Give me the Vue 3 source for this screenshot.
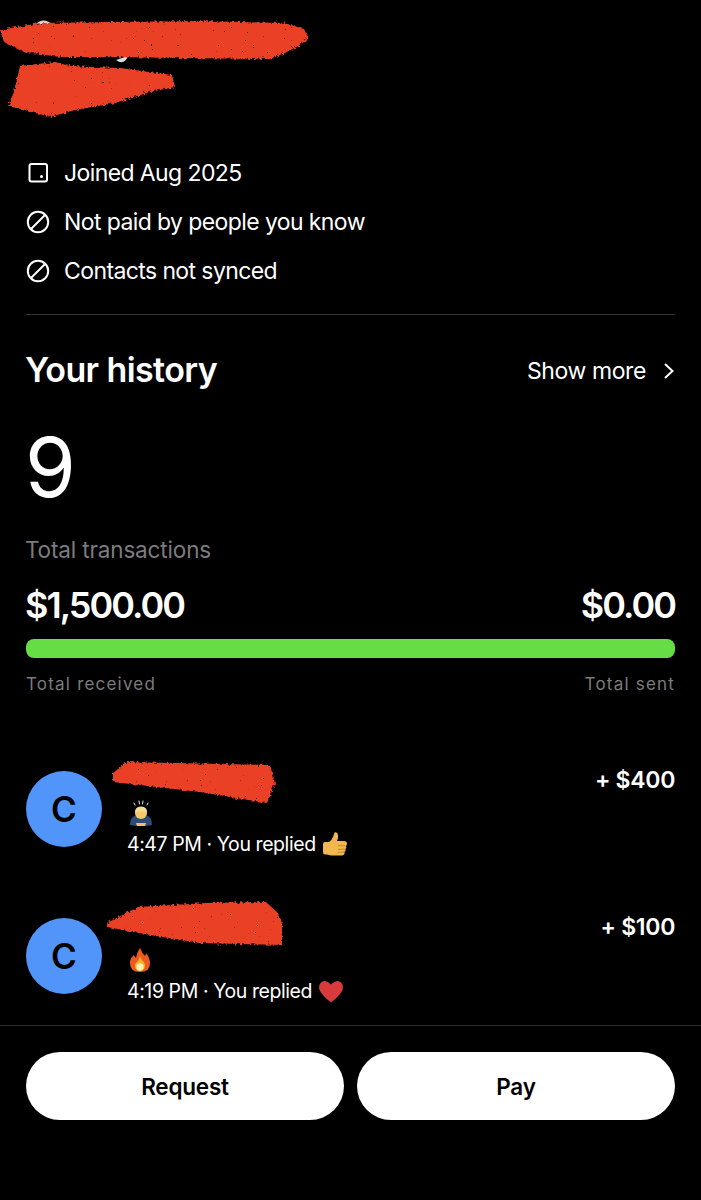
<template>
  <div class="page">
    <header class="profile">
      <svg class="scribble" width="330" height="130" viewBox="0 0 330 130">
        <defs>
          <filter id="rough" x="-5%" y="-15%" width="110%" height="130%">
            <feTurbulence type="fractalNoise" baseFrequency="0.35" numOctaves="2" seed="4" result="n"/>
            <feDisplacementMap in="SourceGraphic" in2="n" scale="5" result="d"/>
            <feTurbulence type="fractalNoise" baseFrequency="0.45" numOctaves="3" seed="9" result="s"/>
            <feColorMatrix in="s" type="matrix" values="0 0 0 0 0  0 0 0 0 0  0 0 0 0 0  0 0 0 -14 12" result="holes"/>
            <feComposite in="d" in2="holes" operator="in"/>
          </filter>
        </defs>
        <path d="M36 24 Q43 17 52 24 Z M116 60 Q124 66 128 56 Z" fill="#dcdcdc"/>
        <g filter="url(#rough)">
          <path fill="#ea4126" d="M0 30 L40 23 L110 22 L200 21 L285 23 L304 29 L308 37 L302 44 L285 53 L270 59 L180 58 L110 57 L60 57 L25 52 L4 42 Z"/>
          <path fill="#ea4126" d="M20 66 L55 62 L70 66 L120 68 L172 75 L175 87 L150 92 L115 103 L75 110 L50 117 L25 110 L8 106 L14 92 Z"/>
        </g>
      </svg>
    </header>

    <ul class="facts">
      <li v-for="fact in facts" :key="fact.text">
        <svg v-if="fact.icon === 'calendar'" width="24" height="24" viewBox="0 0 24 24" fill="none" stroke="#fff" stroke-width="2">
          <rect x="3.500" y="3" width="17.500" height="17.500" rx="2"/>
          <circle cx="15.500" cy="15.500" r="1.500" fill="#fff" stroke="none"/>
        </svg>
        <svg v-else width="24" height="24" viewBox="0 0 24 24" fill="none" stroke="#fff" stroke-width="2">
          <circle cx="12" cy="12" r="10.200"/>
          <line x1="5" y1="19" x2="19" y2="5"/>
        </svg>
        <span>{{ fact.text }}</span>
      </li>
    </ul>

    <section class="history">
      <div class="history-head">
        <h2>Your history</h2>
        <div class="show-more">
          <span>Show more</span>
          <svg width="12" height="18" viewBox="0 0 12 18" fill="none" stroke="#fff" stroke-width="2">
            <polyline points="2,2 9.500,9 2,16"/>
          </svg>
        </div>
      </div>
      <div class="count">9</div>
      <div class="count-label">Total transactions</div>
      <div class="totals">
        <span>$1,500.00</span>
        <span>$0.00</span>
      </div>
      <div class="bar"></div>
      <div class="total-labels">
        <span>Total received</span>
        <span>Total sent</span>
      </div>
    </section>

    <section class="payments">
      <div v-for="p in payments" :key="p.time" class="payment">
        <div class="avatar">C</div>
        <div class="payment-body">
          <svg class="scribble-name" :style="{ left: p.offset + 'px' }" width="180" height="48" viewBox="0 0 180 48">
            <path fill="#ea4126" filter="url(#rough)" :d="p.scribble"/>
          </svg>
          <div class="emoji-line">
            <svg v-if="p.emoji === 'bow'" width="24" height="27" viewBox="0 0 24 27">
              <g stroke="#e8e8e8" stroke-width="1" stroke-linecap="round">
                <line x1="5" y1="3" x2="6" y2="5"/><line x1="10" y1="1" x2="10.500" y2="4"/>
                <line x1="14" y1="1" x2="13.500" y2="4"/><line x1="19" y1="3" x2="18" y2="5"/>
              </g>
              <path fill="#2d4a78" d="M1 25 Q1 17 7 15 L17 15 Q23 17 23 25 L17 26 L7 26 Z"/>
              <circle cx="12" cy="13" r="6" fill="#f5c96a"/>
              <path fill="#f3dc92" d="M6 13 Q5.500 6.500 12 6.500 Q18.500 6.500 18 13 Q12 9.500 6 13Z"/>
              <path fill="#f2c063" d="M7 23 L17 23 L16 26 L8 26 Z"/>
            </svg>
            <svg v-else width="22" height="26" viewBox="0 0 22 26">
              <path fill="#ee5a1f" d="M11 1 Q13 6 16 9 Q17 7 17 6 Q21 11 21 16 Q21 25 11 25 Q1 25 1 16 Q1 11 5 8 Q5.500 10 7 11 Q8 5 11 1Z"/>
              <path fill="#fbb12b" d="M11 9 Q12 13 15 15 Q17 18 15.500 21 Q14 24 11 24 Q7 24 6 20 Q5.500 16 9 14 Q10.500 12 11 9Z"/>
              <ellipse cx="11" cy="20" rx="3.600" ry="3.800" fill="#fff0b8"/>
            </svg>
          </div>
          <div class="meta">
            <span>{{ p.time }} · You replied</span>
            <svg v-if="p.reply === 'thumb'" class="reply-icon" width="26" height="26" viewBox="0 0 26 26">
              <path fill="#f2b74e" d="M1 13 Q1 11 3 11 L7 11 Q10 9 11 6 Q12 3 12.500 1.500 Q15.500 0.500 16 4 Q16.500 7 15 10 L22 10 Q25 10 25 12.500 Q25 14 24 15 Q25 17 23.500 18 Q24 20 22.500 21 Q23 24 20 24.500 L9 24.500 Q7 24 5 23.500 L3 23.500 Q1 23.500 1 21 Z"/>
              <path fill="none" stroke="#b97f2a" stroke-width="0.800" d="M16 14.500 L24 15 M16 18.500 L23.500 18 M16 21.500 L22.500 21"/>
            </svg>
            <svg v-else class="reply-icon" width="26" height="24" viewBox="0 0 26 24">
              <path fill="#d93a3c" d="M13 23.500 Q4 16.500 1.500 11 Q0 6 3.500 3 Q8 0 13 5.500 Q18 0 22.500 3 Q26 6 24.500 11 Q22 16.500 13 23.500Z"/>
            </svg>
          </div>
        </div>
        <div class="amount">{{ p.amount }}</div>
      </div>
    </section>

    <footer class="actions">
      <button>Request</button>
      <button>Pay</button>
    </footer>
  </div>
</template>

<script setup>
const facts = [
  { icon: 'calendar', text: 'Joined Aug 2025' },
  { icon: 'ban', text: 'Not paid by people you know' },
  { icon: 'ban', text: 'Contacts not synced' }
]

const payments = [
  {
    time: '4:47 PM',
    amount: '+ $400',
    emoji: 'bow',
    reply: 'thumb',
    offset: -15,
    scribble: 'M1 15 L15 4 L158 7 L163 25 L155 45 L88 34 L1 24 Z'
  },
  {
    time: '4:19 PM',
    amount: '+ $100',
    emoji: 'fire',
    reply: 'heart',
    offset: -21,
    scribble: 'M1 18 L32 2 L100 -2 L160 -3 L172 8 L176 18 L176 40 L94 38 L44 30 L1 22 Z'
  }
]
</script>

<style>
html, body { background: #000; }
</style>

<style scoped>
.page {
  width: 701px;
  height: 1200px;
  background: #000;
  color: #fff;
  font-family: Inter, "Liberation Sans", sans-serif;
  overflow: hidden;
}

.profile {
  position: relative;
  height: 148px;
}

.scribble {
  position: absolute;
  left: 0;
  top: 0;
}

.facts {
  list-style: none;
  margin: 0;
  padding: 0 26px 19px;
}

.facts li {
  display: flex;
  align-items: center;
  gap: 14px;
  height: 49px;
  font-size: 23px;
  letter-spacing: -0.600px;
}

.history {
  margin: 0 26px;
  border-top: 1px solid #333;
}

.history-head {
  display: flex;
  justify-content: space-between;
  align-items: center;
  margin-top: 31px;
  height: 46px;
}

h2 {
  margin: 0 0 0 -1px;
  font-size: 34px;
  font-weight: 600;
  letter-spacing: -0.600px;
}

.show-more {
  display: flex;
  align-items: center;
  gap: 17px;
  margin-top: 3px;
  font-size: 23px;
  letter-spacing: -0.400px;
}

.count {
  margin-top: 26px;
  height: 100px;
  line-height: 100px;
  font-size: 82px;
  font-weight: 400;
  margin-left: -1px;
}

.count-label {
  margin-top: 19px;
  margin-left: -1px;
  font-size: 22.500px;
  line-height: 26px;
  color: #7c7c7e;
  letter-spacing: -0.150px;
}

.totals {
  display: flex;
  justify-content: space-between;
  margin: 20px 0 0 -1px;
  font-size: 36px;
  line-height: 44px;
  font-weight: 600;
  letter-spacing: -2px;
}

.bar {
  height: 19px;
  margin-top: 12px;
  border-radius: 8px;
  background: #66dd44;
}

.total-labels {
  display: flex;
  justify-content: space-between;
  margin-top: 16px;
  font-size: 17px;
  line-height: 20px;
  color: #7c7c7e;
  letter-spacing: 1.200px;
}

.payments {
  margin: 70px 26px 0;
  display: flex;
  flex-direction: column;
  gap: 33px;
  height: 261px;
}

.payment {
  display: flex;
  flex: none;
  height: 114px;
  align-items: flex-start;
}

.avatar {
  width: 76px;
  height: 76px;
  margin-top: 7px;
  border-radius: 50%;
  background: #5195fb;
  color: #000;
  display: flex;
  align-items: center;
  justify-content: center;
  font-size: 35px;
  font-weight: 600;
  flex-shrink: 0;
}

.payment-body {
  position: relative;
  flex: 1;
  margin-left: 25px;
  padding-top: 35px;
}

.scribble-name {
  position: absolute;
  top: -6px;
  overflow: visible;
}

.emoji-line {
  height: 28px;
  margin-left: 2px;
  display: flex;
  align-items: center;
}

.meta {
  display: flex;
  align-items: center;
  gap: 6px;
  margin-top: 3px;
  font-size: 19.500px;
  line-height: 28px;
  letter-spacing: -0.420px;
}

.amount {
  margin-top: 2px;
  font-size: 23px;
  font-weight: 600;
  line-height: 28px;
  letter-spacing: -0.300px;
}

.actions {
  padding: 26px 26px 0;
  border-top: 1px solid #2b2b2d;
  display: flex;
  gap: 13px;
}

.actions button {
  flex: 1;
  height: 68px;
  border: none;
  border-radius: 34px;
  background: #fff;
  color: #000;
  font-family: inherit;
  font-size: 22.500px;
  font-weight: 600;
  letter-spacing: -0.200px;
}
</style>
